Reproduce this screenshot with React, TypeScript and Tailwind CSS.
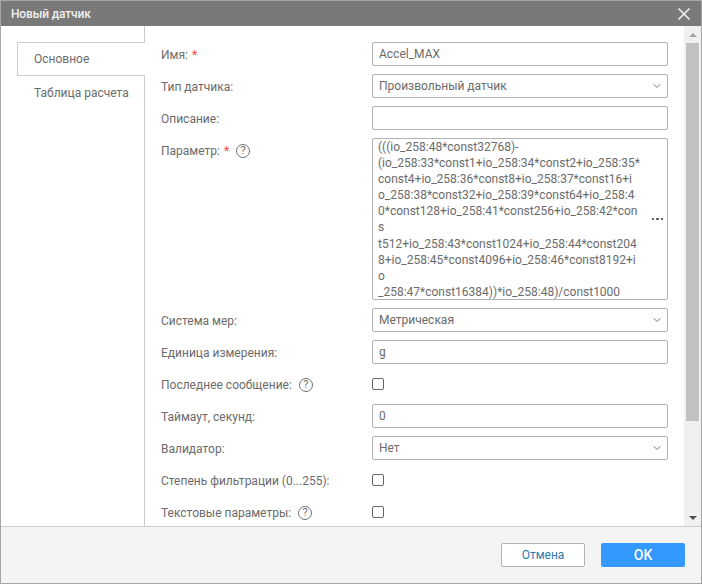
import { ChevronDown, X } from 'lucide-react'

const paramLines = [
  '(((io_258:48*const32768)-',
  '(io_258:33*const1+io_258:34*const2+io_258:35*',
  'const4+io_258:36*const8+io_258:37*const16+i',
  'o_258:38*const32+io_258:39*const64+io_258:4',
  '0*const128+io_258:41*const256+io_258:42*con',
  's',
  't512+io_258:43*const1024+io_258:44*const204',
  '8+io_258:45*const4096+io_258:46*const8192+i',
  'o',
  '_258:47*const16384))*io_258:48)/const1000',
]

function Hint() {
  return (
    <span className="inline-flex h-[14px] w-[14px] items-center justify-center rounded-full border border-[#707070] text-[11px] leading-none text-[#707070]">
      ?
    </span>
  )
}

function Row({ label, required, hint, children }: { label: string; required?: boolean; hint?: boolean; children: React.ReactNode }) {
  return (
    <div className="flex min-h-6 items-start">
      <div className="flex h-6 w-[211px] shrink-0 items-center pt-[1px] text-[#6b6b6b]">
        <span>{label}</span>
        {required && <span className="ml-[4px] text-[#f44]">*</span>}
        {hint && <span className="ml-[7px] flex"><Hint /></span>}
      </div>
      {children}
    </div>
  )
}

function Field({ value }: { value?: string }) {
  return (
    <div className="flex h-6 w-[296px] items-center rounded-[2px] border border-[#b3b3b3] bg-white px-[6px] text-[#6b6b6b]">
      {value}
    </div>
  )
}

function Select({ value }: { value: string }) {
  return (
    <div className="flex h-6 w-[296px] items-center justify-between rounded-[2px] border border-[#b3b3b3] bg-white pl-[6px] pr-[4px] text-[#6b6b6b]">
      <span>{value}</span>
      <ChevronDown className="h-[12px] w-[12px] text-[#777]" strokeWidth={2} />
    </div>
  )
}

function Check() {
  return (
    <div className="flex h-6 items-center">
      <div className="h-3 w-3 rounded-[2px] border border-[#666] bg-white" />
    </div>
  )
}

export default function App() {
  return (
    <div className="flex h-[584px] w-[702px] flex-col overflow-hidden border border-[#a6a6a6] bg-white text-[12px] font-['Roboto',sans-serif]">
      {/* Title */}
      <div className="flex h-[25px] shrink-0 items-center justify-between bg-[#797979] pl-[10px] pr-[7px] text-white">
        <span className="font-medium tracking-[-0.15px] text-[#f0f0f0]">Новый датчик</span>
        <X className="h-[20px] w-[20px] text-[#f0f0f0]" strokeWidth={2} />
      </div>

      {/* Body */}
      <div className="flex min-h-0 flex-1">
        <div className="flex w-[144px] shrink-0 flex-col">
          <div className="h-[16px] shrink-0 border-r border-[#ccc]" />
          <div className="ml-[16px] flex h-[34px] shrink-0 items-center border-y border-l border-[#ccc] pl-[16px] text-[#6b6b6b]">
            Основное
          </div>
          <div className="flex flex-1 flex-col border-r border-[#ccc] pl-[33px] pt-[8px] text-[#6b6b6b]">
            Таблица расчета
          </div>
        </div>
        <div className="min-w-0 flex-1 overflow-hidden pl-[16px] pt-[16px]">
          <div className="flex flex-col gap-2">
            <Row label="Имя:" required><Field value="Accel_MAX" /></Row>
            <Row label="Тип датчика:"><Select value="Произвольный датчик" /></Row>
            <Row label="Описание:"><Field /></Row>
            <Row label="Параметр:" required hint>
              <div className="relative h-[162px] w-[296px] overflow-hidden rounded-[2px] border border-[#b3b3b3] bg-white pl-[5px] text-[#6b6b6b]">
                {paramLines.map((line) => (
                  <div key={line} className="h-[16.1px] whitespace-pre leading-[16px]">{line}</div>
                ))}
                <div className="absolute right-[4px] top-[79px] flex gap-[2px]">
                  <span className="h-[2px] w-[2.5px] bg-[#666]" />
                  <span className="h-[2px] w-[2.5px] bg-[#666]" />
                  <span className="h-[2px] w-[2.5px] bg-[#666]" />
                </div>
              </div>
            </Row>
            <Row label="Система мер:"><Select value="Метрическая" /></Row>
            <Row label="Единица измерения:"><Field value="g" /></Row>
            <Row label="Последнее сообщение:" hint><Check /></Row>
            <Row label="Таймаут, секунд:"><Field value="0" /></Row>
            <Row label="Валидатор:"><Select value="Нет" /></Row>
            <Row label="Степень фильтрации (0...255):"><Check /></Row>
            <Row label="Текстовые параметры:" hint><Check /></Row>
          </div>
        </div>
        {/* Scrollbar */}
        <div className="flex w-[17px] shrink-0 flex-col bg-[#f0f0f0]">
          <div className="flex h-[17px] shrink-0 items-center justify-center">
            <div className="h-0 w-0 border-x-[4px] border-b-[4px] border-x-transparent border-b-[#a3a3a3]" />
          </div>
          <div className="ml-[2px] h-[378px] w-[13px] bg-[#c1c1c1]" />
          <div className="flex-1" />
          <div className="flex h-[17px] shrink-0 items-center justify-center">
            <div className="h-0 w-0 border-x-[4px] border-t-[4px] border-x-transparent border-t-[#505050]" />
          </div>
        </div>
      </div>

      {/* Footer */}
      <div className="flex h-[57px] shrink-0 items-center justify-end gap-4 border-t border-[#ccc] bg-[#f4f4f4] pr-4">
        <div className="flex h-6 w-[84px] items-center justify-center rounded-[2px] border border-[#b3b3b3] bg-white text-[#2b7bb0]">Отмена</div>
        <div className="flex h-6 w-[84px] items-center justify-center rounded-[2px] bg-[#3399ff] text-[14px] font-medium text-white">OK</div>
      </div>
    </div>
  )
}
